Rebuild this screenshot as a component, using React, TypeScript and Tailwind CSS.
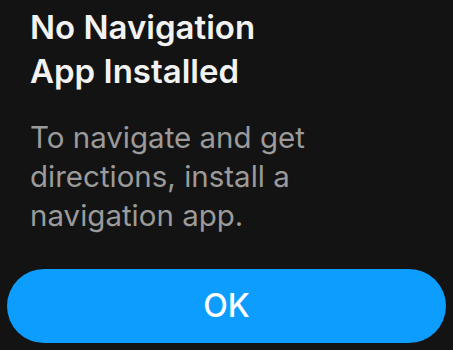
export default function App() {
  return (
    <div
      className="w-[453px] h-[350px] overflow-hidden bg-[#131313] flex flex-col"
      style={{ fontFamily: "Inter, 'Noto Sans', sans-serif" }}
    >
      <div className="px-[30px] pt-[5px]">
        <h1 className="text-[33px] leading-[44px] font-semibold text-[#f2f2f2]">
          No Navigation
          <br />
          App Installed
        </h1>
        <p className="mt-[25px] text-[29.5px] leading-[39px] text-[#9b9b9b]">
          To navigate and get
          <br />
          directions, install a
          <br />
          navigation app.
        </p>
      </div>
      <div className="px-[7px] mt-auto pb-[7px]">
        <button className="w-full h-[74px] rounded-full bg-[#0c9dfe] text-white text-[32px] font-medium flex items-center justify-center">
          OK
        </button>
      </div>
    </div>
  );
}
